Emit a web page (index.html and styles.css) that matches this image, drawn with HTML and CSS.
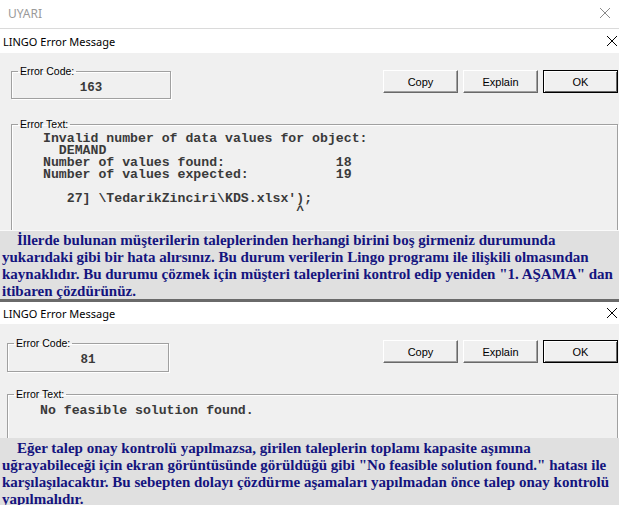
FILE: index.html
```html
<!DOCTYPE html>
<html lang="tr">
<head>
<meta charset="utf-8">
<title>UYARI</title>
<link rel="stylesheet" href="styles.css">
</head>
<body>
<div class="page">
  <header class="wintitle">
    <span class="wintitle-text">UYARI</span>
    <svg class="close close-gray" width="12" height="12" viewBox="0 0 12 12"><path d="M1 1L11 11M11 1L1 11"/></svg>
  </header>

  <section class="dialog dialog-1">
    <div class="dlg-title">
      <span>LINGO Error Message</span>
      <svg class="close" width="12" height="12" viewBox="0 0 12 12"><path d="M1 1L11 11M11 1L1 11"/></svg>
    </div>
    <div class="dlg-body">
      <div class="dlg-top">
        <fieldset class="group group-code"><legend>Error Code:</legend><div class="code-val">163</div></fieldset>
        <div class="buttons">
          <button class="btn">Copy</button>
          <button class="btn">Explain</button>
          <button class="btn btn-default">OK</button>
        </div>
      </div>
      <fieldset class="group group-text"><legend>Error Text:</legend><pre class="err">Invalid number of data values for object:
  DEMAND
Number of values found:              18
Number of values expected:           19

   27] \TedarikZinciri\KDS.xlsx');
                                ^</pre></fieldset>
    </div>
  </section>

  <p class="note note-1">İllerde bulunan müşterilerin taleplerinden herhangi birini boş girmeniz durumunda yukarıdaki gibi bir hata alırsınız. Bu durum verilerin Lingo programı ile ilişkili olmasından kaynaklıdır. Bu durumu çözmek için müşteri taleplerini kontrol edip yeniden "1. AŞAMA" dan itibaren çözdürünüz.</p>

  <section class="dialog dialog-2">
    <div class="dlg-title">
      <span>LINGO Error Message</span>
      <svg class="close" width="12" height="12" viewBox="0 0 12 12"><path d="M1 1L11 11M11 1L1 11"/></svg>
    </div>
    <div class="dlg-body">
      <div class="dlg-top">
        <fieldset class="group group-code"><legend>Error Code:</legend><div class="code-val">81</div></fieldset>
        <div class="buttons">
          <button class="btn">Copy</button>
          <button class="btn">Explain</button>
          <button class="btn btn-default">OK</button>
        </div>
      </div>
      <fieldset class="group group-text"><legend>Error Text:</legend><pre class="err">No feasible solution found.</pre></fieldset>
    </div>
  </section>

  <p class="note note-2">Eğer talep onay kontrolü yapılmazsa, girilen taleplerin toplamı kapasite aşımına uğrayabileceği için ekran görüntüsünde görüldüğü gibi "No feasible solution found." hatası ile karşılaşılacaktır. Bu sebepten dolayı çözdürme aşamaları yapılmadan önce talep onay kontrolü yapılmalıdır.</p>
</div>
</body>
</html>
```

FILE: styles.css
```css
* { box-sizing: border-box; }

html, body {
  margin: 0;
  padding: 0;
  background: #ffffff;
  overflow: hidden;
}

.page {
  width: 619px;
  height: 505px;
  overflow: hidden;
}

.wintitle {
  height: 29px;
  display: flex;
  align-items: center;
  justify-content: space-between;
  padding: 0 8px 2px 8px;
  border-bottom: 1px solid #dadada;
  font: 12px "Noto Sans", "Open Sans", sans-serif;
  color: #9a9a9a;
}

.close {
  fill: none;
  stroke: #000;
  stroke-width: 1;
}

.close-gray {
  stroke: #8a8a8a;
}

.dlg-title {
  height: 24px;
  background: #ffffff;
  display: flex;
  align-items: center;
  justify-content: space-between;
  padding: 0 1px 0 3px;
  font: 11px "Noto Sans", "Open Sans", sans-serif;
  color: #000;
}

.dlg-body {
  background: #f0f0f0;
  overflow: hidden;
  font: 11px "Liberation Sans", Arial, sans-serif;
  color: #000;
}

.dialog-1 .dlg-body {
  height: 177px;
  padding: 12px 1px 0 11px;
}

.dialog-2 .dlg-title {
  height: 22px;
}

.dialog-2 .dlg-body {
  height: 114px;
  padding: 13px 1px 0 7px;
}

.dlg-top {
  display: flex;
  justify-content: space-between;
  align-items: flex-start;
}

.group {
  margin: 0;
  padding: 0;
  border: 1px solid #a0a0a0;
  box-shadow: 1px 1px 0 #ffffff, inset 1px 1px 0 #ffffff;
}

.group legend {
  margin-left: 6px;
  padding: 0 2px;
  font: 10.5px/13px "Liberation Sans", Arial, sans-serif;
  color: #000;
}

.group-code {
  width: 160px;
}

.dialog-2 .group-code {
  width: 162px;
}

.code-val {
  height: 20px;
  text-align: center;
  font: bold 12.5px/21px "Liberation Mono", "Courier New", monospace;
  color: #3a3a3a;
}

.dialog-2 .code-val {
  height: 21px;
}

.buttons {
  display: flex;
  gap: 5px;
  margin-top: 5px;
}

.dialog-2 .buttons {
  margin-top: 3px;
}

.btn {
  width: 75px;
  height: 23px;
  padding: 0;
  background: #f0f0f0;
  border: 1px solid;
  border-color: #ffffff #696969 #696969 #ffffff;
  box-shadow: inset -1px -1px 0 #a0a0a0;
  font: 11px "Liberation Sans", Arial, sans-serif;
  color: #000;
}

.btn-default {
  border: 1px solid #000;
  box-shadow: inset 1px 1px 0 #ffffff, inset -1px -1px 0 #696969;
}

.group-text {
  margin-top: 19px;
  height: 200px;
}

.dialog-2 .group-text {
  margin-top: 16px;
}

.err {
  margin: 0;
  padding: 2px 0 0 31px;
  font: bold 13.2px/12px "Liberation Mono", "Courier New", monospace;
  color: #3a3a3a;
}

.dialog-2 .err {
  padding: 4px 0 0 32px;
}

.note {
  margin: 0;
  background: #e0e0e0;
  padding: 1px 2px 0 2px;
  text-indent: 15px;
  font: bold 15px/17px "Liberation Serif", "Times New Roman", serif;
  color: #14147e;
}

.note-1 {
  height: 72px;
  border-top: 1px solid #fafafa;
  border-bottom: 3px solid #6a6a6a;
}

.note-2 {
  padding-top: 2px;
  height: 80px;
}
```
